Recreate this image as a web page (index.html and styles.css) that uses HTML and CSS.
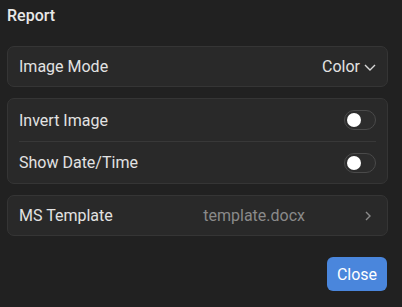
FILE: index.html
```html
<!DOCTYPE html>
<html lang="en">
<head>
    <meta charset="UTF-8">
    <title>Report</title>
    <link rel="stylesheet" href="styles.css">
</head>
<body>
    <div class="dialog">
        <h1 class="dialog-title">Report</h1>

        <div class="card">
            <div class="row">
                <span class="label">Image Mode</span>
                <span class="select">Color
                    <svg width="12" height="12" viewBox="0 0 12 12"><path d="M1 4 L6 9 L11 4" fill="none" stroke="#d8d8d8" stroke-width="1.4"/></svg>
                </span>
            </div>
        </div>

        <div class="card">
            <div class="row tall">
                <span class="label">Invert Image</span>
                <span class="toggle"><span class="knob"></span></span>
            </div>
            <div class="row tall divided">
                <span class="label">Show Date/Time</span>
                <span class="toggle"><span class="knob"></span></span>
            </div>
        </div>

        <div class="card">
            <div class="row">
                <span class="label">MS Template</span>
                <span class="value">template.docx</span>
                <svg class="chevron" width="8" height="12" viewBox="0 0 8 12"><path d="M2 2 L6 6 L2 10" fill="none" stroke="#8a8a8a" stroke-width="1.4"/></svg>
            </div>
        </div>

        <div class="actions">
            <button class="close-button">Close</button>
        </div>
    </div>
</body>
</html>
```

FILE: styles.css
```css
* {
    margin: 0;
    padding: 0;
    box-sizing: border-box;
}
body {
    font-family: Roboto, "Liberation Sans", sans-serif;
    background: #212121;
    color: #e2e2e2;
}
.dialog {
    padding: 6px 14px 0 7px;
}
.dialog-title {
    font-size: 16px;
    font-weight: 500;
    color: #e8e8e8;
    line-height: 20px;
    margin-bottom: 20px;
}
.card {
    background: #292929;
    border: 1px solid #353535;
    border-radius: 7px;
    padding: 0 11px;
    margin-bottom: 11px;
}
.row {
    display: flex;
    align-items: center;
    height: 39px;
    font-size: 16px;
}
.row.tall {
    height: 42px;
}
.row.tall.divided {
    height: 42px;
    border-top: 1px solid #383838;
}
.label {
    color: #e2e2e2;
}
.select {
    margin-left: auto;
    display: flex;
    align-items: center;
    gap: 4px;
    color: #e2e2e2;
}
.toggle {
    margin-left: auto;
    width: 32px;
    height: 20px;
    border: 1px solid #4a4a4a;
    border-radius: 10px;
    background: #2c2c2c;
    display: flex;
    align-items: center;
    padding-left: 2px;
}
.knob {
    width: 14px;
    height: 14px;
    border-radius: 50%;
    background: #fff;
}
.value {
    margin-left: auto;
    margin-right: 59px;
    color: #8a8a8a;
}
.chevron {
    margin-right: 4px;
}
.actions {
    display: flex;
    justify-content: flex-end;
    padding-top: 10px;
}
.close-button {
    background: #4a86dc;
    color: #fff;
    border: none;
    border-radius: 6px;
    font-family: Roboto, "Liberation Sans", sans-serif;
    font-size: 16px;
    width: 60px;
    height: 34px;
    margin-right: 1px;
}
```
